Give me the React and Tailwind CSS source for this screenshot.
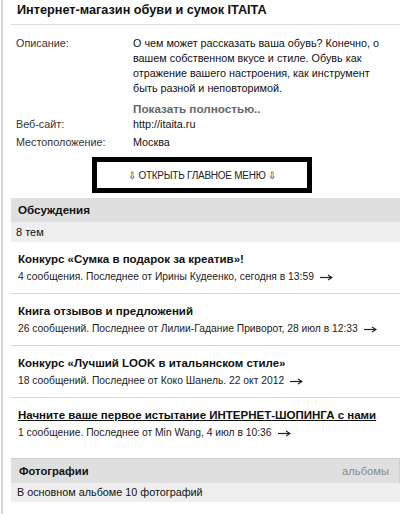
function Arrow() {
  return (
    <svg width="13" height="7" viewBox="0 0 13 7" className="inline-block ml-[6px] align-middle">
      <path d="M0 3.5 H11" stroke="#222" strokeWidth="1.2" />
      <path d="M8 1 L12 3.5 L8 6" fill="none" stroke="#222" strokeWidth="1.2" />
    </svg>
  );
}

export default function App() {
  const topics = [
    { t: "Конкурс «Сумка в подарок за креатив»!", s: "4 сообщения. Последнее от Ирины Кудеенко, сегодня в 13:59" },
    { t: "Книга отзывов и предложений", s: "26 сообщений. Последнее от Лилии-Гадание Приворот, 28 июл в 12:33" },
    { t: "Конкурс «Лучший LOOK в итальянском стиле»", s: "18 сообщений. Последнее от Коко Шанель. 22 окт 2012" },
    { t: "Начните ваше первое истытание ИНТЕРНЕТ-ШОПИНГА с нами", s: "1 сообщение. Последнее от Min Wang, 4 июл в 10:36", u: true },
  ];
  return (
    <div className="w-[410px] h-[514px] bg-white overflow-hidden text-[#111] font-['Liberation_Sans',sans-serif]">
      <div className="ml-[1px] border-l-2 border-[#d8d8d8] h-full pl-[8px] pr-[10px]">
        <div className="pt-[2px] pl-[6px] pb-[6px] border-b border-[#dcdcdc] text-[12.7px] font-bold leading-[16px]">
          Интернет-магазин обуви и сумок ITAITA
        </div>
        <div className="pl-[5px] pt-[11px] text-[10.8px]">
          <div className="flex leading-[15px]">
            <div className="w-[117px] shrink-0 text-[#333]">Описание:</div>
            <div className="whitespace-nowrap">
              О чем может рассказать ваша обувь? Конечно, о<br />
              вашем собственном вкусе и стиле. Обувь как<br />
              отражение вашего настроения, как инструмент<br />
              быть разной и неповторимой.
              <div className="font-bold text-[#666] text-[11.7px] leading-[12px] mt-[7px]">Показать полностью..</div>
            </div>
          </div>
          <div className="flex leading-[18px]">
            <div className="w-[117px] shrink-0 text-[#333]">Веб-сайт:</div>
            <div>http://itaita.ru</div>
          </div>
          <div className="flex leading-[18px]">
            <div className="w-[117px] shrink-0 text-[#333]">Местоположение:</div>
            <div>Москва</div>
          </div>
        </div>
        <div className="flex pl-[81px] mt-[6px]">
          <div className="w-[220px] h-[36px] border-[5px] border-black flex items-center justify-center text-[10px] text-[#222] tracking-tight">
            ⇩ ОТКРЫТЬ ГЛАВНОЕ МЕНЮ ⇩
          </div>
        </div>
        <div className="mt-[5px] bg-[#dfdfdf] h-[24px] flex items-center pl-[7px] text-[11.6px] font-bold">Обсуждения</div>
        <div className="bg-[#eeeeee] h-[20px] flex items-center pl-[5px] text-[11px]">8 тем</div>
        <div>
          {topics.map((x, i) => (
            <div key={i} className={`pl-[7px] pt-[9px] ${i < 3 ? "pb-[9px] border-b border-[#d6d6d6]" : "pb-[0px]"}`}>
              <div className={`text-[11.5px] font-bold leading-[16px] ${x.u ? "underline" : ""}`}>{x.t}</div>
              <div className="text-[10.3px] leading-[14px] mt-[3px] text-[#222] whitespace-nowrap">
                {x.s}<Arrow />
              </div>
            </div>
          ))}
        </div>
        <div className="mt-[18px] bg-[#dfdfdf] h-[25px] flex items-center justify-between pl-[8px] pr-[10px] text-[11.2px] border-t border-r border-[#cfcfcf]">
          <span className="font-bold">Фотографии</span>
          <span className="text-[#8a8a8a]">альбомы</span>
        </div>
        <div className="bg-[#eeeeee] h-[19px] flex items-center pl-[6px] text-[10.8px]">В основном альбоме 10 фотографий</div>
      </div>
    </div>
  );
}
